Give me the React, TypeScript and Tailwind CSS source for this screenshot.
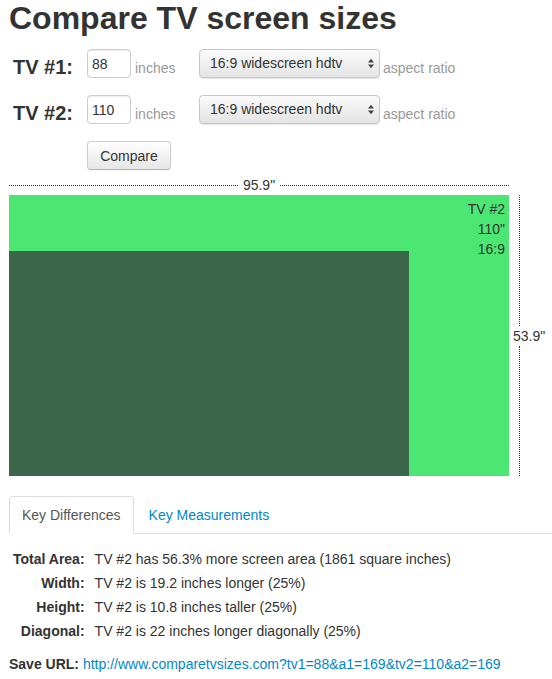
export default function App() {
  const rows = [
    { label: "Total Area:", text: "TV #2 has 56.3% more screen area (1861 square inches)" },
    { label: "Width:", text: "TV #2 is 19.2 inches longer (25%)" },
    { label: "Height:", text: "TV #2 is 10.8 inches taller (25%)" },
    { label: "Diagonal:", text: "TV #2 is 22 inches longer diagonally (25%)" },
  ];

  return (
    <div className="min-h-screen bg-white pl-[9px] pt-[2px] text-[#333] font-['Liberation_Sans',Arial,sans-serif] text-[14px]">
      <h1 className="text-[32px] leading-[32px] font-bold text-[#333]">Compare TV screen sizes</h1>

      {/* Form */}
      {[
        { label: "TV #1:", size: "88" },
        { label: "TV #2:", size: "110" },
      ].map((tv, i) => (
        <div key={i} className={`flex items-start h-[29px] ${i === 0 ? "mt-[15px]" : "mt-[17px]"}`}>
          <div className="w-[78px] pl-[4px] text-[20px] font-bold leading-[37px] whitespace-nowrap">{tv.label}</div>
          <input
            type="text"
            defaultValue={tv.size}
            className="w-[44px] h-[29px] border border-[#ccc] rounded-[4px] pl-[4px] text-[14px] leading-[25px] text-[#333] shadow-[inset_0_1px_1px_rgba(0,0,0,0.075)] outline-none"
          />
          <span className="w-[68px] pl-[4px] text-[#999] leading-[39px]">inches</span>
          <div className="relative flex items-center w-[181px] h-[29px] border border-[#c8c8c8] rounded-[4px] bg-gradient-to-b from-[#fbfbfb] to-[#e4e4e4] shadow-[0_1px_1px_rgba(0,0,0,0.1)] pl-[10px]">
            <span className="flex-1 leading-[27px] text-[#333]">16:9 widescreen hdtv</span>
            <svg width="6" height="11" viewBox="0 0 7 11" className="mr-[5px]">
              <path d="M3.5 0 L7 4.2 L0 4.2 Z" fill="#444" />
              <path d="M0 6.8 L7 6.8 L3.5 11 Z" fill="#444" />
            </svg>
          </div>
          <span className="pl-[3px] text-[#999] leading-[39px] whitespace-nowrap">aspect ratio</span>
        </div>
      ))}

      <button className="mt-[17px] ml-[78px] w-[84px] h-[29px] border border-[#ccc] border-b-[#b3b3b3] rounded-[4px] bg-gradient-to-b from-white to-[#e6e6e6] shadow-[0_1px_2px_rgba(0,0,0,0.05)] text-[14px] text-[#333] leading-[20px]">
        Compare
      </button>

      {/* Width ruler */}
      <div className="mt-[7px] flex items-center w-[500px] h-[16px]">
        <div className="flex-1 border-t border-dotted border-[#333]"></div>
        <span className="px-[5px] leading-[16px] text-[#333]">95.9"</span>
        <div className="flex-1 border-t border-dotted border-[#333]"></div>
      </div>

      {/* Screens */}
      <div className="mt-[2px] flex">
        <div className="relative w-[500px] h-[281px] bg-[#4ce673]">
          <div className="pt-[4px] pr-[4px] text-right leading-[20px] text-[#333]">
            <div>TV #2</div>
            <div>110"</div>
            <div>16:9</div>
          </div>
          <div className="absolute left-0 bottom-0 w-[400px] h-[225px] bg-[#3b6649]"></div>
        </div>
        <div className="ml-[4px] flex flex-col h-[281px]">
          <div className="flex-1 ml-[6px] border-l border-dotted border-[#333]"></div>
          <span className="leading-[20px] text-[#333]">53.9"</span>
          <div className="flex-1 ml-[6px] border-l border-dotted border-[#333]"></div>
        </div>
      </div>

      {/* Tabs */}
      <div className="mt-[20px] flex border-b border-[#ddd]">
        <div className="mb-[-1px] mr-[2px] px-[12px] py-[8px] leading-[20px] border border-[#ddd] border-b-transparent rounded-t-[4px] bg-white text-[#555]">
          Key Differences
        </div>
        <div className="mb-[-1px] px-[12px] py-[8px] leading-[20px] border border-transparent text-[#0088cc]">
          Key Measurements
        </div>
      </div>

      <table className="mt-[13px] border-collapse">
        <tbody>
          {rows.map((r) => (
            <tr key={r.label} className="h-[24px]">
              <td className="pl-[4px] pr-[5px] text-right font-bold leading-[20px] whitespace-nowrap">{r.label}</td>
              <td className="pl-[5px] leading-[20px] whitespace-nowrap">{r.text}</td>
            </tr>
          ))}
        </tbody>
      </table>

      <p className="mt-[11px] leading-[20px]">
        <span className="font-bold">Save URL: </span>
        <a href="#" className="text-[#0088cc]">
          http://www.comparetvsizes.com?tv1=88&amp;a1=169&amp;tv2=110&amp;a2=169
        </a>
      </p>
    </div>
  );
}
